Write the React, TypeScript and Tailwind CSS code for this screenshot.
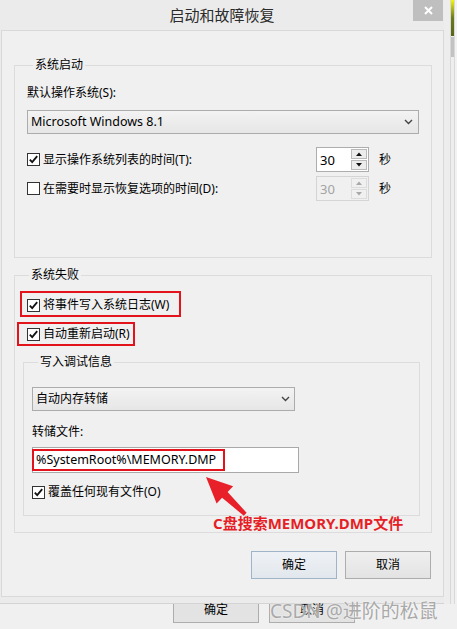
import React from "react";

function Check({ checked }: { checked: boolean }) {
  return (
    <span className="w-[13px] h-[13px] border border-[#333333] bg-white flex items-center justify-center shrink-0">
      {checked && (
        <svg width="11" height="11" viewBox="0 0 11 11">
          <path d="M1.8 5.6 L4.2 8.2 L9.2 2.2" stroke="#111111" strokeWidth="1.8" fill="none" />
        </svg>
      )}
    </span>
  );
}

function Chevron() {
  return (
    <svg width="9" height="6" viewBox="0 0 9 6" className="shrink-0">
      <path d="M1 1 L4.5 4.5 L8 1" stroke="#444444" strokeWidth="1.4" fill="none" />
    </svg>
  );
}

function Spin({ disabled }: { disabled?: boolean }) {
  return (
    <div
      className={
        disabled
          ? "w-[53px] h-[25px] border border-[#d4d4d4] bg-[#f0f0f0] text-[#a3a3a3] flex shrink-0"
          : "w-[53px] h-[25px] border border-[#adadad] bg-white text-[#000000] flex shrink-0"
      }
    >
      <div className="flex-1 pl-[3px] flex items-center text-[13px]">30</div>
      <div className="w-[17px] flex flex-col gap-[1px] py-[1px] pr-[1px]">
        <div
          className={
            disabled
              ? "flex-1 border border-[#dcdcdc] bg-[#f0f0f0] flex items-center justify-center"
              : "flex-1 border border-[#b9b9b9] bg-[#ececec] flex items-center justify-center"
          }
        >
          <svg width="6" height="4" viewBox="0 0 6 4">
            <path d="M0 4 L3 0.5 L6 4 Z" fill={disabled ? "#a8a8a8" : "#111111"} />
          </svg>
        </div>
        <div
          className={
            disabled
              ? "flex-1 border border-[#dcdcdc] bg-[#f0f0f0] flex items-center justify-center"
              : "flex-1 border border-[#b9b9b9] bg-[#ececec] flex items-center justify-center"
          }
        >
          <svg width="6" height="4" viewBox="0 0 6 4">
            <path d="M0 0 L3 3.5 L6 0 Z" fill={disabled ? "#a8a8a8" : "#111111"} />
          </svg>
        </div>
      </div>
    </div>
  );
}

export default function App() {
  return (
    <div className="relative w-[457px] h-[629px] bg-[#f0f0f0] overflow-hidden font-['Noto_Sans','Noto_Sans_CJK_SC',sans-serif] text-[12px] leading-[16px] text-[#000000]">
      <div className="flex h-[604px]">
        {/* dialog */}
        <div className="w-[444px] h-[604px] bg-[#ebebeb] border-b border-[#d4d4d4] flex flex-col shrink-0">
          {/* title bar */}
          <div className="h-[30px] grid grid-cols-[31px_1fr_31px] shrink-0">
            <div />
            <div className="flex items-center justify-center text-[15px] text-[#2b2b2b] font-['Noto_Sans_CJK_SC',sans-serif]">
              启动和故障恢复
            </div>
            <div className="flex items-start">
              <div className="w-[30px] h-[21px] bg-[#bfbfbf] flex items-center justify-center">
                <svg width="9" height="9" viewBox="0 0 9 9">
                  <path d="M1 1 L8 8 M8 1 L1 8" stroke="#ffffff" strokeWidth="2" />
                </svg>
              </div>
            </div>
          </div>

          {/* panel */}
          <div className="ml-[1px] w-[443px] h-[567px] border border-[#d9d9d9] bg-[#f0f0f0] pl-[12px] pr-[11px] pt-[26px] flex flex-col shrink-0">
            {/* group 1 */}
            <fieldset className="border border-[#dcdcdc] px-[12px] pb-[56px]">
              <legend className="ml-[6px] px-[2px] leading-[16px]">系统启动</legend>
              <div className="mt-[12px]">默认操作系统(S):</div>
              <div className="mt-[9px] h-[24px] border border-[#acacac] bg-linear-to-b from-[#f3f3f3] to-[#e6e6e6] flex items-center pl-[3px] pr-[5px]">
                <span className="flex-1 text-[12.5px]">Microsoft Windows 8.1</span>
                <Chevron />
              </div>
              <div className="mt-[13px] h-[25px] flex items-center">
                <div className="flex-1 flex items-center gap-[3px]">
                  <Check checked />
                  <span>显示操作系统列表的时间(T):</span>
                </div>
                <Spin />
                <div className="w-[50px] pl-[10px]">秒</div>
              </div>
              <div className="mt-[4px] h-[25px] flex items-center">
                <div className="flex-1 flex items-center gap-[3px]">
                  <Check checked={false} />
                  <span>在需要时显示恢复选项的时间(D):</span>
                </div>
                <Spin disabled />
                <div className="w-[50px] pl-[10px]">秒</div>
              </div>
            </fieldset>

            {/* group 2 */}
            <fieldset className="mt-[9px] border border-[#dcdcdc] pl-[8px] pr-[11px] pb-[16px]">
              <legend className="ml-[6px] px-[2px] leading-[16px]">系统失败</legend>
              <div className="relative mt-[14px] ml-[4px] h-[16px] flex items-center gap-[3px]">
                <Check checked />
                <span>将事件写入系统日志(W)</span>
                <div className="absolute -left-[7px] -top-[6px] w-[161px] h-[26px] border-2 border-[#e3131b]" />
              </div>
              <div className="relative mt-[13px] ml-[4px] h-[16px] flex items-center gap-[3px]">
                <Check checked />
                <span>自动重新启动(R)</span>
                <div className="absolute -left-[10px] -top-[4px] w-[118px] h-[24px] border-2 border-[#e3131b]" />
              </div>

              {/* sub group */}
              <fieldset className="mt-[12px] border border-[#dcdcdc] pl-[8px] pr-[8px] pb-[15px]">
                <legend className="ml-[6px] px-[2px] leading-[16px]">写入调试信息</legend>
                <div className="mt-[17px] w-[263px] h-[24px] border border-[#acacac] bg-linear-to-b from-[#f3f3f3] to-[#e6e6e6] flex items-center pl-[3px] pr-[4px]">
                  <span className="flex-1">自动内存转储</span>
                  <Chevron />
                </div>
                <div className="mt-[13px]">转储文件:</div>
                <div className="relative mt-[7px] w-[267px] h-[26px] border border-[#a9a9a9] bg-white flex items-center pl-[3px] text-[12.5px]">
                  %SystemRoot%\MEMORY.DMP
                  <div className="absolute -left-[1px] top-[1px] w-[193px] h-[22px] border-2 border-[#e3131b]" />
                </div>
                <div className="mt-[11px] h-[16px] flex items-center gap-[3px]">
                  <Check checked />
                  <span>覆盖任何现有文件(O)</span>
                </div>
              </fieldset>
            </fieldset>

            {/* buttons */}
            <div className="mt-[18px] pr-[1px] flex justify-end gap-[8px]">
              <div className="w-[86px] h-[28px] border border-[#9fb3c9] bg-linear-to-b from-[#eef2f6] to-[#e2e7ed] flex items-center justify-center">
                确定
              </div>
              <div className="w-[86px] h-[28px] border border-[#adadad] bg-linear-to-b from-[#efefef] to-[#e3e3e3] flex items-center justify-center">
                取消
              </div>
            </div>
          </div>
        </div>

        {/* right strip */}
        <div className="flex-1 flex">
          <div className="w-[6px] h-[604px] bg-[#ededed]" />
          <div className="w-[1px] h-[604px] bg-[#d8d8d8]" />
          <div className="w-[3px] flex flex-col">
            <div className="h-[36px] bg-linear-to-b from-[#f4f700] via-[#6b7a1c] to-[#55661a]" />
            <div className="h-[1px]" />
            <div className="h-[20px] bg-[#c2c2c2]" />
            <div className="flex-1 bg-[#eeeeee]" />
          </div>
          <div className="w-[1px] h-[604px] bg-[#d8d8d8]" />
          <div className="flex-1 bg-[#f2f2f2]" />
        </div>
      </div>

      {/* background window buttons */}
      <div className="h-[25px] flex pl-[173px] gap-[10px]">
        <div className="w-[86px] h-[19px] border-x border-b border-[#adadad] bg-[#e3e3e3] flex items-start justify-center leading-[12px] pt-[0px]">
          确定
        </div>
        <div className="w-[86px] h-[19px] border-x border-b border-[#adadad] bg-[#e3e3e3] flex items-start justify-center leading-[12px]">
          取消
        </div>
      </div>

      {/* annotation arrow */}
      <svg className="absolute left-[200px] top-[472px]" width="50" height="48" viewBox="0 0 50 48">
        <polygon
          points="6,5 33.1,14.2 27.6,20 46.6,40.8 43.8,43.7 22.1,25.8 16.6,31.6"
          fill="#e8202a"
        />
      </svg>
      <div className="absolute left-[213px] top-[513px] text-[15px] leading-[20px] font-bold text-[#e61f26] whitespace-nowrap">
        C盘搜索MEMORY.DMP文件
      </div>

      {/* watermark */}
      <div className="absolute left-[270px] top-[599px] text-[19px] leading-[24px] text-[#a9a9a9] whitespace-nowrap [text-shadow:0_0_2px_#ffffff]">
        CSDN @进阶的松鼠
      </div>
    </div>
  );
}
